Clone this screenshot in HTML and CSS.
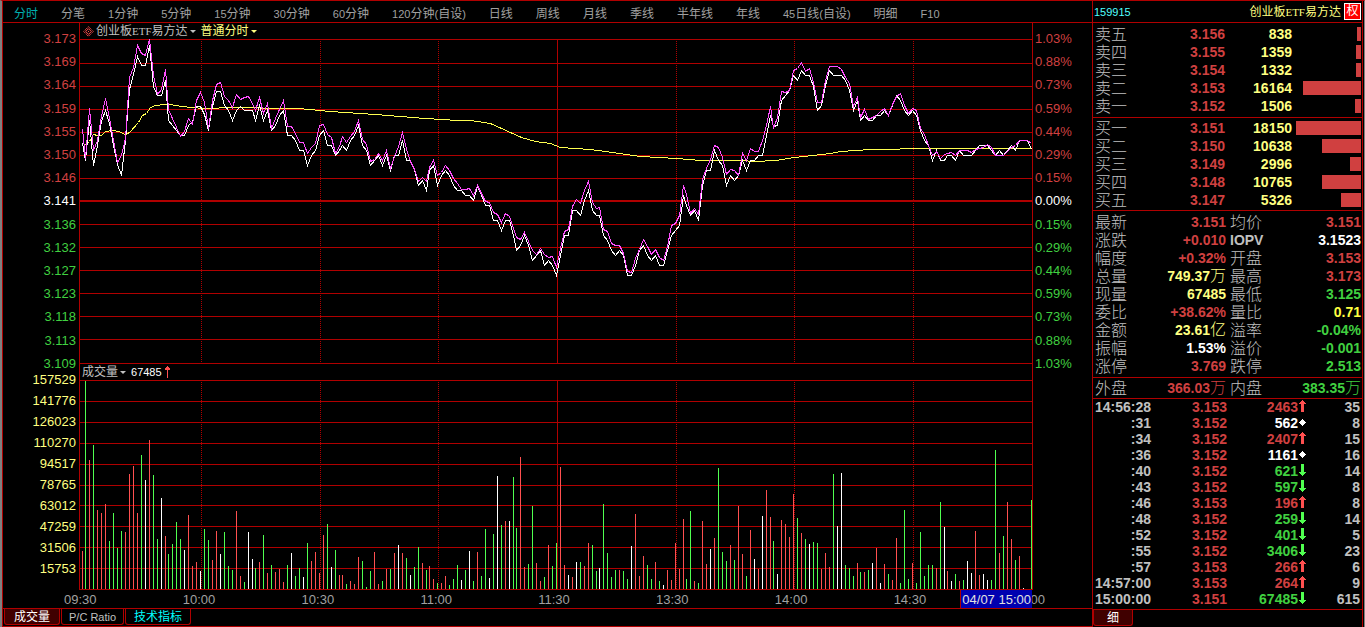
FILE: index.html
```html
<!DOCTYPE html>
<html lang="zh-CN">
<head>
<meta charset="utf-8">
<title>创业板ETF易方达 159915</title>
<link rel="stylesheet" href="styles.css">
</head>
<body>
<div class="app">
  <main class="main">
    <nav class="periods">
      <a href="#" class="active">分时</a>
      <a href="#">分笔</a>
      <a href="#"><span class="num">1</span>分钟</a>
      <a href="#"><span class="num">5</span>分钟</a>
      <a href="#"><span class="num">15</span>分钟</a>
      <a href="#"><span class="num">30</span>分钟</a>
      <a href="#"><span class="num">60</span>分钟</a>
      <a href="#"><span class="num">120</span>分钟<span class="num">(</span>自设<span class="num">)</span></a>
      <a href="#">日线</a>
      <a href="#">周线</a>
      <a href="#">月线</a>
      <a href="#">季线</a>
      <a href="#">半年线</a>
      <a href="#">年线</a>
      <a href="#"><span class="num">45</span>日线<span class="num">(</span>自设<span class="num">)</span></a>
      <a href="#">明细</a>
      <a href="#"><span class="num">F10</span></a>
    </nav>

    <section class="charts">
      <div class="pane-head price-head">
        <svg class="mark" viewBox="0 0 11 11" width="11" height="11" aria-hidden="true">
          <path d="M5.5 0.7 L10.3 5.5 L5.5 10.3 L0.7 5.5 Z" fill="none" stroke="#ff5050" stroke-dasharray="1.400 0.600"/>
          <path d="M5.5 2.700 L8.300 5.5 L5.5 8.300 L2.700 5.5 Z" fill="none" stroke="#ff5050"/>
          <rect x="5" y="5" width="1" height="1" fill="#ff5050"/>
        </svg>
        <button type="button" class="drop">创业板<span class="latin">ETF</span>易方达<i class="caret"></i></button>
        <button type="button" class="drop yellow">普通分时<i class="caret"></i></button>
      </div>
      <ul class="scale left price-scale">
        <li class="up">3.173</li><li class="up">3.169</li><li class="up">3.164</li><li class="up">3.159</li><li class="up">3.155</li><li class="up">3.150</li><li class="up">3.146</li><li class="flat">3.141</li><li class="down">3.136</li><li class="down">3.132</li><li class="down">3.127</li><li class="down">3.123</li><li class="down">3.118</li><li class="down">3.113</li><li class="down">3.109</li>
      </ul>
      <div class="plot price-plot"><svg id="price" viewBox="0 0 952 325" preserveAspectRatio="none" role="img" aria-label="分时走势"></svg></div>
      <ul class="scale right price-scale">
        <li class="up">1.03%</li><li class="up">0.88%</li><li class="up">0.73%</li><li class="up">0.59%</li><li class="up">0.44%</li><li class="up">0.29%</li><li class="up">0.15%</li><li class="flat">0.00%</li><li class="down">0.15%</li><li class="down">0.29%</li><li class="down">0.44%</li><li class="down">0.59%</li><li class="down">0.73%</li><li class="down">0.88%</li><li class="down">1.03%</li>
      </ul>
      <div class="pane-head vol-head">
        <button type="button" class="drop">成交量<i class="caret"></i></button>
        <span class="num flat">67485</span>
        <svg class="rise" viewBox="0 0 7 12" width="7" height="12" aria-hidden="true"><path d="M3 0h1v1h1v1h1v2H4v8H3V4H1V2h1V1h1z" fill="#ff5050"/></svg>
      </div>
      <ul class="scale left vol-scale">
        <li>157529</li><li>141776</li><li>126023</li><li>110270</li><li>94517</li><li>78765</li><li>63012</li><li>47259</li><li>31506</li><li>15753</li><li></li>
      </ul>
      <div class="plot vol-plot"><svg id="volume" viewBox="0 0 952 210" preserveAspectRatio="none" role="img" aria-label="成交量"></svg></div>
      <div class="times">
        <span>09:30</span><span>10:00</span><span>10:30</span><span>11:00</span><span>11:30</span><span>13:30</span><span>14:00</span><span>14:30</span><span>15:00</span>
        <b class="cursor-time">04/07 15:00</b>
      </div>
    </section>

    <div class="tabs">
      <button type="button" class="tab selected">成交量</button>
      <button type="button" class="tab small">P/C Ratio</button>
      <button type="button" class="tab cyan">技术指标</button>
    </div>
  </main>

  <aside class="quote">
    <header class="title">
      <span class="code">159915</span>
      <span class="name">创业板<span class="latin">ETF</span>易方达</span>
      <span class="badge">权</span>
    </header>

    <table class="depth asks">
      <tr><th>卖五</th><td class="up">3.156</td><td class="yellow">838</td><td><i class="bar" style="width:4px"></i></td></tr>
      <tr><th>卖四</th><td class="up">3.155</td><td class="yellow">1359</td><td><i class="bar" style="width:5px"></i></td></tr>
      <tr><th>卖三</th><td class="up">3.154</td><td class="yellow">1332</td><td><i class="bar" style="width:5px"></i></td></tr>
      <tr><th>卖二</th><td class="up">3.153</td><td class="yellow">16164</td><td><i class="bar" style="width:58px"></i></td></tr>
      <tr><th>卖一</th><td class="up">3.152</td><td class="yellow">1506</td><td><i class="bar" style="width:6px"></i></td></tr>
    </table>
    <table class="depth bids">
      <tr><th>买一</th><td class="up">3.151</td><td class="yellow">18150</td><td><i class="bar" style="width:65px"></i></td></tr>
      <tr><th>买二</th><td class="up">3.150</td><td class="yellow">10638</td><td><i class="bar" style="width:39px"></i></td></tr>
      <tr><th>买三</th><td class="up">3.149</td><td class="yellow">2996</td><td><i class="bar" style="width:11px"></i></td></tr>
      <tr><th>买四</th><td class="up">3.148</td><td class="yellow">10765</td><td><i class="bar" style="width:39px"></i></td></tr>
      <tr><th>买五</th><td class="up">3.147</td><td class="yellow">5326</td><td><i class="bar" style="width:20px"></i></td></tr>
    </table>

    <table class="stats">
      <tr><th>最新</th><td class="up">3.151</td><th>均价</th><td class="up">3.151</td></tr>
      <tr><th>涨跌</th><td class="up">+0.010</td><th class="strong">IOPV</th><td class="flat">3.1523</td></tr>
      <tr><th>幅度</th><td class="up">+0.32%</td><th>开盘</th><td class="up">3.153</td></tr>
      <tr><th>总量</th><td class="yellow">749.37<span class="unit">万</span></td><th>最高</th><td class="up">3.173</td></tr>
      <tr><th>现量</th><td class="yellow">67485</td><th>最低</th><td class="down">3.125</td></tr>
      <tr><th>委比</th><td class="up">+38.62%</td><th>量比</th><td class="bright">0.71</td></tr>
      <tr><th>金额</th><td class="yellow">23.61<span class="unit">亿</span></td><th>溢率</th><td class="down">-0.04%</td></tr>
      <tr><th>振幅</th><td class="flat">1.53%</td><th>溢价</th><td class="down">-0.001</td></tr>
      <tr><th>涨停</th><td class="up">3.769</td><th>跌停</th><td class="down">2.513</td></tr>
    </table>
    <table class="stats sides">
      <tr><th>外盘</th><td class="up">366.03<span class="unit">万</span></td><th>内盘</th><td class="down">383.35<span class="unit">万</span></td></tr>
    </table>

    <svg class="defs" aria-hidden="true">
      <symbol id="a-up" viewBox="0 0 7 12"><path d="M3 0h1v1h1v1h1v1h1v1H5v8H2V4H0V3h1V2h1V1h1z" fill="#ff5050"/></symbol>
      <symbol id="a-down" viewBox="0 0 7 12"><path d="M2 0h3v8h2v1H6v1H5v1H4v1H3v-1H2v-1H1V9H0V8h2z" fill="#50ff50"/></symbol>
      <symbol id="a-flat" viewBox="0 0 7 12"><path d="M3 3h1v1h1v1h1v1h1v1H6v1H5v1H4v1H3V9H2V8H1V7H0V6h1V5h1V4h1z" fill="#fff"/></symbol>
    </svg>
    <table class="ticks">
      <tr><td>14:56:28</td><td class="up">3.153</td><td class="up">2463</td><td><svg><use href="#a-up"/></svg></td><td>35</td></tr>
      <tr><td>:31</td><td class="up">3.152</td><td class="flat">562</td><td><svg><use href="#a-flat"/></svg></td><td>8</td></tr>
      <tr><td>:34</td><td class="up">3.152</td><td class="up">2407</td><td><svg><use href="#a-up"/></svg></td><td>15</td></tr>
      <tr><td>:36</td><td class="up">3.152</td><td class="flat">1161</td><td><svg><use href="#a-flat"/></svg></td><td>16</td></tr>
      <tr><td>:40</td><td class="up">3.152</td><td class="down">621</td><td><svg><use href="#a-down"/></svg></td><td>14</td></tr>
      <tr><td>:43</td><td class="up">3.152</td><td class="down">597</td><td><svg><use href="#a-down"/></svg></td><td>8</td></tr>
      <tr><td>:46</td><td class="up">3.153</td><td class="up">196</td><td><svg><use href="#a-up"/></svg></td><td>8</td></tr>
      <tr><td>:48</td><td class="up">3.152</td><td class="down">259</td><td><svg><use href="#a-down"/></svg></td><td>14</td></tr>
      <tr><td>:52</td><td class="up">3.152</td><td class="down">401</td><td><svg><use href="#a-down"/></svg></td><td>5</td></tr>
      <tr><td>:55</td><td class="up">3.152</td><td class="down">3406</td><td><svg><use href="#a-down"/></svg></td><td>23</td></tr>
      <tr><td>:57</td><td class="up">3.153</td><td class="up">266</td><td><svg><use href="#a-up"/></svg></td><td>6</td></tr>
      <tr><td>14:57:00</td><td class="up">3.153</td><td class="up">264</td><td><svg><use href="#a-up"/></svg></td><td>9</td></tr>
      <tr><td>15:00:00</td><td class="up">3.151</td><td class="down">67485</td><td><svg><use href="#a-down"/></svg></td><td>615</td></tr>
    </table>
    <div class="detail-tabs"><button type="button" class="tab selected">细</button></div>
  </aside>
</div>
<script src="chart.js"></script>
</body>
</html>
```
FILE: styles.css
```css
* { box-sizing: border-box; }

body {
  margin: 0;
  background: #000;
  color: #c0c0c0;
  font: 12px/16px "Liberation Sans", "Noto Sans CJK SC", sans-serif;
}

a { color: inherit; text-decoration: none; }
ul { margin: 0; padding: 0; list-style: none; }
button {
  margin: 0;
  padding: 0;
  border: 0;
  background: none;
  color: inherit;
  font: inherit;
  cursor: pointer;
}
table { width: 100%; border-collapse: collapse; table-layout: fixed; }
th, td { padding: 0; white-space: nowrap; }

.up { color: #d04040; }
.down { color: #40d040; }
.flat { color: #fff; }
.yellow { color: #ffff80; }
.bright { color: #ffff40; }
.num { font-size: 11px; }
.latin { font-family: "Liberation Serif", serif; font-size: 11px; }

.app {
  display: flex;
  min-height: 100vh;
  border-top: 1px solid #b00000;
  border-left: 2px solid #808080;
  border-right: 1px solid #808080;
}

.main {
  flex: 1;
  min-width: 0;
  display: flex;
  flex-direction: column;
  border-left: 1px solid #b00000;
  border-bottom: 1px solid #b00000;
}

.periods {
  display: flex;
  gap: 23px;
  height: 22px;
  padding: 5px 11px 0;
  border-bottom: 1px solid #b00000;
  white-space: nowrap;
  color: #a0a0a0;
}
.periods .active { color: #00b0b0; }

.charts {
  flex: 1;
  display: grid;
  grid-template-columns: 76px 1fr 59px;
  grid-template-rows: 16px 325fr 16px 210fr 18px;
}

.pane-head {
  grid-column: 2;
  display: flex;
  align-items: center;
  border: solid #b00000;
  border-width: 0 1px;
  line-height: 18px;
}
.price-head { grid-row: 1; padding-left: 3px; }
.vol-head { grid-row: 3; padding-left: 2px; }
.mark { margin-right: 2px; }
.rise { margin-left: 2px; }
.drop { display: flex; align-items: center; margin-right: 5px; }
.caret {
  margin-left: 2px;
  border: solid transparent;
  border-width: 3px 3px 0;
  border-top-color: currentColor;
}

.scale {
  display: flex;
  flex-direction: column;
  justify-content: space-between;
  margin: -8px 0;
  font-size: 13px;
}
.scale li { height: 16px; }
.left { grid-column: 1; padding-right: 3px; text-align: right; }
.right { grid-column: 3; padding-left: 2px; }
.price-scale { grid-row: 2; }
.vol-scale { grid-row: 4; color: #ffff80; }

.plot {
  grid-column: 2;
  position: relative;
  border: solid #b00000;
  border-width: 0 1px;
}
.price-plot { grid-row: 2; }
.vol-plot { grid-row: 4; }
.plot svg {
  position: absolute;
  width: 100%;
  height: 100%;
  shape-rendering: crispEdges;
}
.grid { fill: #b00000; }
.dots { stroke: #b00000; stroke-dasharray: 1 1; }
.line { fill: none; stroke-width: 1; }
.line-price { stroke: #fff; }
.line-iopv { stroke: #ff50ff; }
.line-avg { stroke: #ffff50; }
.vol-r { fill: #ff5050; }
.vol-g { fill: #50ff50; }
.vol-w { fill: #fff; }

.times {
  grid-column: 1 / 4;
  grid-row: 5;
  position: relative;
  display: flex;
  justify-content: space-between;
  padding: 0 47px 0 61px;
  font-size: 13px;
  line-height: 19px;
  color: #a0a0a0;
}
.cursor-time {
  position: absolute;
  right: 60px;
  top: 0;
  bottom: 0;
  padding: 0 1px;
  border-left: 1px solid #b00000;
  background: #0000b0;
  color: #e0e0e0;
  font-weight: normal;
}

.tabs {
  display: flex;
  gap: 1px;
  height: 18px;
  padding-left: 1px;
  border-top: 1px solid #b00000;
}
.tab {
  height: 16px;
  padding: 0 9px;
  border: 1px solid #b00000;
  border-top: 0;
  border-radius: 0 0 3px 3px;
  line-height: 16px;
}
.tab.selected { background: #400000; color: #fff; }
.tab.small { padding: 0 7px; font-size: 11px; }
.tab.cyan { padding: 0 8px; color: #00ffff; }

.quote {
  width: 271px;
  border: solid #b00000;
  border-width: 0 1px;
  margin-right: 1px;
}

.title {
  display: flex;
  align-items: center;
  height: 22px;
  padding: 0 1px;
  border-bottom: 1px solid #b00000;
}
.code { flex: 1; font-size: 11px; color: #50ffff; }
.name { line-height: 18px; color: #ffff80; }
.badge {
  width: 17px;
  height: 17px;
  margin-left: 3px;
  border: 1px solid #fff;
  background: #ff0000;
  color: #fff;
  line-height: 15px;
  text-align: center;
}

.depth, .stats {
  display: block;
  border-bottom: 1px solid #b00000;
  font-size: 14px;
  font-weight: bold;
}
.depth tr, .stats tr {
  display: grid;
  height: 18px;
  line-height: 18px;
  padding: 0 1px 0 2px;
}
.depth tbody, .stats tbody { display: block; }
.depth tr { grid-template-columns: 40px 90px 67px 1fr; }
.stats tr { grid-template-columns: 40px 91px 40px 1fr; }
.depth th, .stats th, .unit {
  font-size: 16px;
  font-weight: 300;
  text-align: left;
}
.depth th, .stats th { line-height: 20px; }
.depth td, .stats td { text-align: right; }
.stats th + td + th { padding-left: 4px; }
.stats .strong { font-size: 14px; font-weight: bold; line-height: 18px; }
.asks { padding: 2px 0; }
.bids { padding: 1px 0; }
.stats { padding: 2px 0; }
.sides { padding: 1px 0; }
.bar {
  display: block;
  height: 14px;
  margin: 2px 0 0 auto;
  background: #d04040;
}

.defs { display: none; }
.ticks {
  display: block;
  padding-bottom: 2px;
  border-bottom: 1px solid #b00000;
  font-size: 14px;
  font-weight: bold;
}
.ticks tbody { display: block; }
.ticks tr {
  display: grid;
  grid-template-columns: 57px 76px 72px 9px 1fr;
  height: 16px;
  line-height: 17px;
  padding: 0 2px 0 1px;
  text-align: right;
}
.ticks td:nth-child(3) { padding-right: 1px; }
.ticks svg { display: block; width: 7px; height: 12px; margin: 1px 0 0; }
.detail-tabs { display: flex; }
.detail-tabs .tab { padding: 0 13px; }
```
FILE: chart.js
```javascript
const NS = "http://www.w3.org/2000/svg";
const STEP = 949 / 240;
const minuteX = i => Math.floor(2 + STEP * i);

// One value per minute, as distance in chart units from the top of the window.
const price = [
  143,160,120,165,145,121,110,123,145,164,175,140,89,74,56,65,65,45,86,95,
  95,80,120,125,130,135,135,125,121,106,106,114,130,106,91,91,105,110,120,110,
  106,110,110,110,120,105,120,110,130,125,115,110,135,135,140,150,150,165,155,150,
  135,130,145,145,155,150,145,150,140,135,125,145,150,165,160,155,165,155,170,155,
  155,140,160,160,170,185,180,190,170,165,185,175,170,175,185,190,190,195,195,200,
  186,195,205,205,220,220,230,220,220,235,250,245,235,245,260,255,250,265,260,265,
  275,255,235,235,210,210,215,200,190,210,215,215,235,240,250,255,250,255,275,275,
  265,250,245,255,260,255,265,265,250,235,230,225,195,205,215,210,220,185,170,170,
  150,160,165,185,175,180,175,160,170,160,160,155,155,135,115,126,125,100,95,90,
  75,80,70,75,75,86,110,105,85,70,75,75,75,80,90,110,100,120,115,120,
  120,115,115,110,115,105,95,100,110,115,110,115,130,140,145,160,150,160,160,155,
  155,160,150,155,155,155,150,145,145,145,150,155,150,155,150,145,150,140,140,140,149
];
const iopv = [
  129,158,108,150,140,116,98,118,140,162,155,138,77,67,45,53,55,39,75,94,
  89,69,109,118,127,136,131,118,124,100,92,102,128,100,84,82,96,100,107,94,
  99,97,96,103,110,97,113,103,128,118,109,100,126,126,133,142,142,153,147,143,
  125,124,134,137,153,146,136,142,136,131,120,139,144,161,159,153,160,150,168,156,
  146,132,149,161,169,181,177,181,167,160,175,172,165,170,178,183,189,189,188,195,
  185,193,201,202,212,214,222,213,216,228,237,239,232,241,250,254,248,254,257,256,
  267,248,231,229,206,199,203,190,181,202,208,207,229,231,243,245,245,253,271,272,
  258,249,239,246,254,249,257,260,246,225,223,215,185,194,213,208,214,179,168,159,
  145,147,157,174,169,170,175,153,160,148,151,151,140,125,106,128,117,91,92,90,
  70,68,62,71,68,82,102,102,80,66,66,66,69,77,83,106,97,117,109,119,
  117,115,111,108,115,104,96,93,105,113,108,110,128,134,145,155,151,158,154,153,
  152,155,150,150,150,152,149,148,147,144,147,155,155,155,151,147,145,140,140,140,143
];
const average = [
  [84,145],[89,141],[93,134],[97,135],[101,135],[105,131],[113,130],[118,131],[125,134],[129,132],
  [138,122],[142,115],[146,113],[150,107],[155,105],[165,104],[170,104],[175,105],[190,107],[205,108],
  [215,108],[222,107],[298,108],[330,111],[375,114],[425,118],[457,120],[470,120],[490,123],[521,137],
  [535,141],[550,143],[560,147],[590,149],[605,151],[640,156],[676,158],[700,160],[740,160],[755,161],
  [775,160],[794,157],[830,153],[840,151],[870,149],[930,148],[1031,148]
];

const volume = `
r38 g208 r129 g144 r79 r76 r85 g48 g76 g41 g58 r57 r115 r123 r76 g134 w109 r149 g114 g50
w91 r53 g35 g45 g67 g50 w39 r74 r23 r27 w18 g60 g49 r29 r58 w35 g57 g23 g19 r78
r13 g7 w57 w30 g21 r27 g54 r16 g24 r17 r20 r7 g24 w36 g13 g21 w12 g46 r28 r37
r16 r54 g65 w22 g39 r14 r14 g5 r8 r5 r32 g28 g2 g18 r37 r5 g8 r20 g20 r36
w44 r36 g31 w14 g22 g42 r26 g19 r23 r10 g6 r6 r13 g4 g10 g24 w9 g19 w38 g8
r37 g13 g60 w11 g55 w113 g64 r68 w68 g112 g61 r132 r22 g25 g83 r26 r8 g12 r44 g23
g46 r122 r24 w14 r12 w27 g27 r23 r46 g44 g18 w21 g85 g36 g12 g19 r19 g18 g10 w43
r75 r13 r33 g24 g10 r27 g8 w4 r19 r9 r46 r20 r70 g10 g78 r8 g6 r68 r25 w40
r51 g121 g37 g28 r44 g29 r83 r35 g13 r59 w30 r20 w73 r99 r72 g48 w15 r69 r65 r52
r95 g71 r56 g50 w45 g47 g46 r20 r36 r22 g115 w63 w116 g24 g21 g13 r26 g17 r17 g19
w26 r41 w6 r25 g15 r9 r51 g6 g79 g10 r26 g6 g57 g13 g24 g24 r21 g87 w62 r18
w8 g15 r8 g9 w28 w16 r58 r14 w15 w9 g9 g139 r36 g53 r87 r50 g29 r33 w1 w0
g89`.trim().split(/\s+/);

function add(svg, tag, attrs) {
  const el = document.createElementNS(NS, tag);
  for (const key in attrs) el.setAttribute(key, attrs[key]);
  svg.appendChild(el);
}

function drawGrid(svg, rows, height, thick) {
  rows.forEach(y => add(svg, "rect", {
    class: "grid", x: 0, y: y === thick ? y - 1 : y, width: 952, height: y === thick ? 2 : 1
  }));
  [121, 240, 358, 596, 714, 833].forEach(x => add(svg, "line", {
    class: "dots", x1: x + 0.5, x2: x + 0.5, y1: 2, y2: height
  }));
  add(svg, "rect", { class: "grid", x: 477, y: 0, width: 1, height });
}

function drawLine(svg, points, cls) {
  add(svg, "polyline", {
    class: "line " + cls,
    points: points.map(([x, y]) => (x + 0.5) + "," + (y + 0.5)).join(" ")
  });
}

const TOP = 39;
const LEFT = 80;
const priceSvg = document.getElementById("price");
drawGrid(priceSvg, [0, 24, 47, 70, 93, 116, 139, 162, 185, 208, 231, 254, 277, 300, 324], 325, 162);
drawLine(priceSvg, average.map(([x, y]) => [x - LEFT, y - TOP]), "line-avg");
drawLine(priceSvg, price.map((y, i) => [minuteX(i), y - TOP]), "line-price");
drawLine(priceSvg, iopv.map((y, i) => [minuteX(i), y - TOP]), "line-iopv");

const volumeSvg = document.getElementById("volume");
drawGrid(volumeSvg, [0, 21, 42, 63, 84, 105, 125, 146, 167, 188, 209], 209);
volume.forEach((item, i) => {
  const h = Number(item.slice(1));
  add(volumeSvg, "rect", { class: "vol-" + item[0], x: minuteX(i), y: 209 - h, width: 1, height: h });
});
```
